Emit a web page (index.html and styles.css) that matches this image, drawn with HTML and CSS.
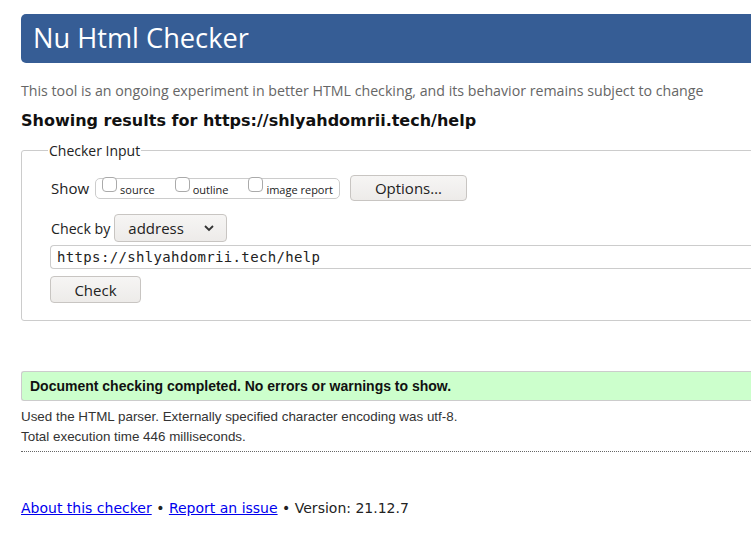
FILE: index.html
```html
<!DOCTYPE html>
<html lang="en">
<head>
<meta charset="utf-8">
<title>Nu Html Checker</title>
<link rel="stylesheet" href="styles.css">
</head>
<body>
<div class="page">
  <h1 class="title">Nu Html Checker</h1>
  <p class="intro">This tool is an ongoing experiment in better HTML checking, and its behavior remains subject to change</p>
  <h2 class="showing">Showing results for https://shlyahdomrii.tech/help</h2>
  <fieldset class="input-set">
    <legend class="legend">Checker Input</legend>
    <div class="row show-row">
      <span class="label">Show</span>
      <div class="show-group">
        <label class="opt"><span class="box"></span>source</label>
        <label class="opt"><span class="box"></span>outline</label>
        <label class="opt"><span class="box"></span>image report</label>
      </div>
      <button class="btn btn-options" type="button">Options…</button>
    </div>
    <div class="row checkby-row">
      <span class="label label-small">Check by</span>
      <div class="select">
        <span>address</span>
        <svg class="chev" width="12" height="8" viewBox="0 0 12 8"><path d="M2 2 L6 6 L10 2" fill="none" stroke="#333" stroke-width="1.8"/></svg>
      </div>
    </div>
    <div class="url">https://shlyahdomrii.tech/help</div>
    <button class="btn btn-check" type="button">Check</button>
  </fieldset>
  <div class="success">Document checking completed. No errors or warnings to show.</div>
  <p class="info">Used the HTML parser. Externally specified character encoding was utf-8.</p>
  <p class="info">Total execution time 446 milliseconds.</p>
  <div class="dotted"></div>
  <p class="footer"><a href="#">About this checker</a> • <a href="#">Report an issue</a> • Version: 21.12.7</p>
</div>
</body>
</html>
```
FILE: styles.css
```css
html, body {
  margin: 0;
  padding: 0;
  overflow: hidden;
  background: #fff;
}
.page {
  width: 900px;
  padding-left: 21px;
  padding-top: 14px;
  font-family: "Open Sans", "DejaVu Sans", sans-serif;
  color: #222;
}
.title {
  margin: 0;
  height: 49px;
  line-height: 47px;
  background: #365d95;
  color: #fff;
  border-radius: 5px;
  padding-left: 12px;
  font-weight: normal;
  font-size: 27.2px;
  font-family: "Open Sans", sans-serif;
}
.intro {
  margin: 18px 0 0 0;
  font-size: 14.2px;
  line-height: 20px;
  color: #666;
}
.showing {
  margin: 9px 0 0 0;
  font-family: "DejaVu Sans", sans-serif;
  font-weight: bold;
  font-size: 16px;
  line-height: 22px;
  color: #111;
}
.input-set {
  margin: 9px 0 0 0;
  border: 1px solid #ccc;
  border-radius: 3px;
  padding: 15px 0 17px 28px;
  min-width: 0;
}
.legend {
  font-size: 14px;
  padding: 0 1px;
  margin-left: -2px;
  color: #222;
}
.row {
  display: flex;
  align-items: center;
}
.label {
  font-size: 15px;
  margin-left: 1px;
}
.label-small {
  font-size: 14.2px;
}
.show-group {
  display: flex;
  align-items: flex-start;
  margin-left: 6px;
  height: 19px;
  border: 1px solid #ccc;
  border-radius: 5px;
  padding: 0 6px;
  font-size: 11px;
}
.opt {
  display: flex;
  align-items: flex-start;
  margin-right: 20px;
  line-height: 21px;
}
.opt:last-child {
  margin-right: 0;
}
.box {
  width: 15px;
  height: 15px;
  box-sizing: border-box;
  border: 1px solid #aaa;
  border-radius: 4px;
  margin-top: -2px;
  margin-right: 3px;
  background: #fff;
}
.btn {
  font-family: "Open Sans", sans-serif;
  font-size: 15px;
  color: #222;
  background: linear-gradient(#f6f5f4, #edebe9);
  border: 1px solid #c8c5c2;
  border-radius: 4px;
  padding: 0;
}
.btn-options {
  margin-left: 10px;
  width: 117px;
  height: 26px;
}
.checkby-row {
  margin-top: 13px;
}
.select {
  margin-left: 4px;
  width: 113px;
  height: 28px;
  box-sizing: border-box;
  display: flex;
  align-items: center;
  justify-content: space-between;
  padding: 0 11px 0 13px;
  border: 1px solid #c8c5c2;
  border-radius: 4px;
  background: linear-gradient(#f6f5f4, #edebe9);
  font-size: 15px;
}
.chev {
  display: block;
}
.url {
  margin-top: 3px;
  height: 24px;
  box-sizing: border-box;
  border: 1px solid #ccc;
  border-right: none;
  border-radius: 4px 0 0 4px;
  padding-left: 6px;
  font-family: "DejaVu Sans Mono", monospace;
  font-size: 14px;
  line-height: 22px;
  color: #222;
  letter-spacing: 0.35px;
}
.btn-check {
  margin-top: 7px;
  width: 91px;
  height: 27px;
  display: block;
}
.success {
  margin-top: 50px;
  height: 30px;
  box-sizing: border-box;
  border: 1px solid #ccc;
  border-right: none;
  border-radius: 3px 0 0 3px;
  background: #ccffcc;
  font-family: "Liberation Sans", Arial, sans-serif;
  font-weight: bold;
  font-size: 14px;
  line-height: 28px;
  padding-left: 8px;
  color: #111;
}
.info {
  margin: 0;
  font-family: "Liberation Sans", Arial, sans-serif;
  font-size: 13.4px;
  line-height: 20px;
  color: #333;
}
.success + .info {
  margin-top: 6px;
}
.dotted {
  margin-top: 4px;
  border-top: 1px dotted #666;
  height: 0;
}
.footer {
  margin: 46px 0 0 0;
  font-family: "DejaVu Sans", sans-serif;
  font-size: 14px;
  line-height: 20px;
  color: #222;
}
.footer a {
  color: #0000ee;
}
```
